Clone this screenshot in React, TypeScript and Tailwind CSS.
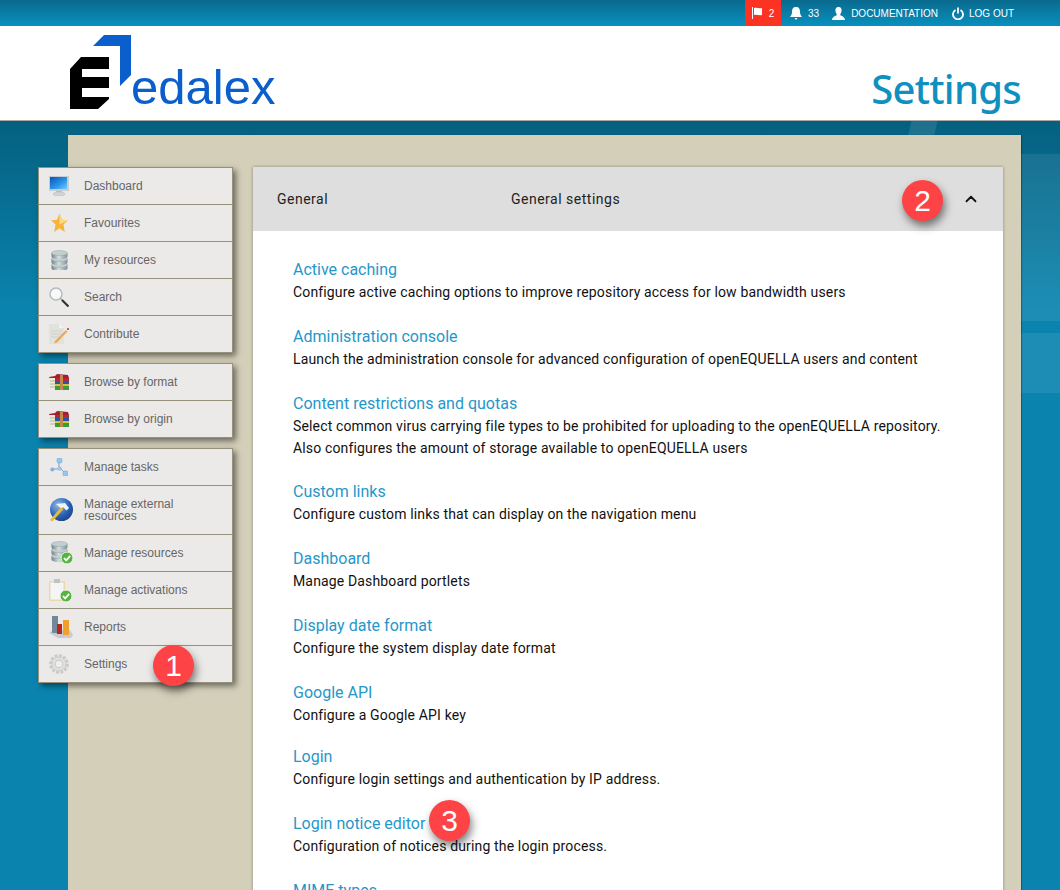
import React from 'react';
import { ChevronUp } from 'lucide-react';

const settingsLinks = [
  { title: 'Active caching', desc: ['Configure active caching options to improve repository access for low bandwidth users'] },
  { title: 'Administration console', desc: ['Launch the administration console for advanced configuration of openEQUELLA users and content'] },
  {
    title: 'Content restrictions and quotas',
    desc: [
      'Select common virus carrying file types to be prohibited for uploading to the openEQUELLA repository.',
      'Also configures the amount of storage available to openEQUELLA users',
    ],
  },
  { title: 'Custom links', desc: ['Configure custom links that can display on the navigation menu'], nudge: '-mt-[1px]' },
  { title: 'Dashboard', desc: ['Manage Dashboard portlets'] },
  { title: 'Display date format', desc: ['Configure the system display date format'] },
  { title: 'Google API', desc: ['Configure a Google API key'] },
  { title: 'Login', desc: ['Configure login settings and authentication by IP address.'], nudge: '-mt-[3px]' },
  { title: 'Login notice editor', desc: ['Configuration of notices during the login process.'] },
  { title: 'MIME types', desc: ['Configure MIME types'] },
];

const CheckBadge = ({ cx = 17, cy = 18 }: { cx?: number; cy?: number }) => (
  <g>
    <circle cx={cx} cy={cy} r="6" fill="#55b53f" stroke="#eef6e8" strokeWidth="1" />
    <path d={`M${cx - 3} ${cy}l2.200 2.400 4-4.600`} fill="none" stroke="#fff" strokeWidth="1.800" />
  </g>
);

const Db = ({ check = false }: { check?: boolean }) => (
  <svg width={check ? 24 : 17} height={check ? 24 : 20} viewBox={check ? '-1 0 24 24' : '0 0 17 20'} className={check ? 'ml-[1px]' : 'ml-[2px]'}>
    <defs>
      <linearGradient id="dbg" x1="0" x2="1" y1="0" y2="0">
        <stop offset="0" stopColor="#6f8388" />
        <stop offset="0.45" stopColor="#d5dee0" />
        <stop offset="1" stopColor="#7f9296" />
      </linearGradient>
    </defs>
    {[12, 6, 0].map((y) => (
      <g key={y}>
        <path d={`M0.500 ${y + 3}v3.500c0 3.500 16 3.500 16 0v-3.500z`} fill="url(#dbg)" />
        <ellipse cx="8.500" cy={y + 3} rx="8" ry="2.500" fill="#c3ced1" stroke="#8b9a9d" strokeWidth="0.400" />
      </g>
    ))}
    {check && <CheckBadge cx={16} cy={17} />}
  </svg>
);

const Books = () => (
  <svg width="20" height="16" viewBox="0 0 20 16">
    <path d="M0 3l6-1 2-2 11 1 1 3-13 0-6 1z" fill="#a01f34" />
    <path d="M6 4h14v3H6z" fill="#b5273c" />
    <path d="M6 7h14v3H6z" fill="#2a55a8" />
    <path d="M6 10h14v2H6z" fill="#d8c23a" />
    <path d="M6 12h14v4H6z" fill="#3b9a3a" />
    <path d="M0 4l6 0v3H2zM1 8h5v2H3zM1 11h5v2H3zM2 13.500h4V16H4z" fill="#efe9d6" />
    <path d="M1 7h5M1 10h5M1 13h5" stroke="#8c9a6a" strokeWidth="0.600" />
    <path d="M11 1h3v15h-3z" fill="#c08a4c" />
  </svg>
);

const icons: Record<string, React.ReactNode> = {
  monitor: (
    <svg width="20" height="20" viewBox="0 0 20 20">
      <defs>
        <linearGradient id="scr" x1="0" x2="1" y1="0" y2="1">
          <stop offset="0" stopColor="#0b55b8" />
          <stop offset="0.6" stopColor="#2c97ea" />
          <stop offset="1" stopColor="#7cc8f6" />
        </linearGradient>
      </defs>
      <path d="M0 0h20v15H0z" fill="#c5cdd1" />
      <path d="M1 1h17v12H1z" fill="url(#scr)" />
      <path d="M7 15h6v2H7z" fill="#b8bec1" />
      <ellipse cx="10" cy="18" rx="6" ry="2" fill="#d0d4d6" stroke="#b3b8ba" strokeWidth="0.500" />
    </svg>
  ),
  star: (
    <svg width="17" height="20" viewBox="0 0 18 20" className="ml-[2px]">
      <path d="M9 0l2.600 6.500L18 7.200l-4.800 4.500 1.400 7.800L9 15.600 3.400 19.500l1.400-7.800L0 7.200l6.400-.7z" fill="#f8b33a" />
      <path d="M9 0l2.600 6.500L18 7.200l-9 4.300z" fill="#fbdc80" />
    </svg>
  ),
  db: <Db />,
  search: (
    <svg width="20" height="20" viewBox="0 0 20 20">
      <circle cx="7" cy="7" r="6" fill="#f6f8f9" stroke="#b4babd" strokeWidth="1.400" />
      <path d="M11.500 11.500l1.500 1.500" stroke="#9aa0a3" strokeWidth="1.500" />
      <path d="M13 13l6.500 6.500" stroke="#333" strokeWidth="2.200" />
    </svg>
  ),
  contribute: (
    <svg width="20" height="20" viewBox="0 0 20 20">
      <path d="M0 0h10l5 4v16H0z" fill="#e2e2dd" />
      <path d="M10 0v4h5z" fill="#f2f2ef" />
      <path d="M2 7h11M2 10h11M2 13h8" stroke="#d2d2cd" />
      <path d="M6 17L17 6l1.500 1.500L8 18.500 5 19.500z" fill="#e9a85c" />
      <circle cx="19" cy="5" r="1" fill="#b5303a" />
    </svg>
  ),
  books: <Books />,
  tasks: (
    <svg width="18" height="18" viewBox="0 0 18 18" className="ml-[1px]">
      <path d="M9 4v6M2 11h10M9 9l6 6" stroke="#7c9cc4" strokeWidth="1" fill="none" />
      <rect x="7" y="0" width="5" height="5" rx="1.500" fill="#9cc5ee" stroke="#6f9ad0" strokeWidth="0.500" />
      <circle cx="2.300" cy="11.500" r="2" fill="#7fb0e6" />
      <rect x="7.500" y="8.500" width="4" height="4" rx="1" fill="#9cc5ee" />
      <rect x="13" y="13" width="5" height="5" rx="1.500" fill="#9cc5ee" stroke="#6f9ad0" strokeWidth="0.500" />
    </svg>
  ),
  hammer: (
    <svg width="24" height="24" viewBox="0 0 24 24">
      <defs>
        <radialGradient id="glb" cx="0.350" cy="0.300" r="0.800">
          <stop offset="0" stopColor="#8fb8ea" />
          <stop offset="0.6" stopColor="#2b62b5" />
          <stop offset="1" stopColor="#173f86" />
        </radialGradient>
      </defs>
      <circle cx="12.500" cy="11.500" r="11.500" fill="url(#glb)" />
      <path d="M1 22L12 9l2.500 2L3.500 23.500z" fill="#e5bb3a" />
      <path d="M7 6l9-1 4 5-2.500 2.500-3-3-3 .5z" fill="#f0f2f5" />
    </svg>
  ),
  dbCheck: <Db check />,
  clipboard: (
    <svg width="24" height="24" viewBox="0 0 24 24">
      <path d="M0 3h16v20H0z" fill="#ecd9a5" />
      <path d="M1.500 4.500h13V21.500h-13z" fill="#f3f5f6" />
      <path d="M5 1h6v4H5z" fill="#bfc3c6" />
      <CheckBadge cx={17} cy={18} />
    </svg>
  ),
  chart: (
    <svg width="24" height="24" viewBox="0 0 24 24">
      <path d="M0 18l4-3h17l3 5-2 3H9z" fill="#c6ccd1" />
      <path d="M3 1h6v17H3z" fill="#72889a" />
      <path d="M8 9h5v10H8z" fill="#b8261c" />
      <path d="M14 5h6v15h-6z" fill="#f0a02c" />
    </svg>
  ),
  gear: (
    <svg width="20" height="20" viewBox="0 0 20 20">
      <circle cx="10" cy="10" r="8.500" fill="none" stroke="#c9c9c9" strokeWidth="2.600" strokeDasharray="3 1.400" />
      <circle cx="10" cy="10" r="6.800" fill="#e2e2e0" stroke="#c6c6c6" strokeWidth="0.800" />
      <circle cx="10" cy="10" r="3.800" fill="#eeeeec" stroke="#cbcbcb" strokeWidth="1.200" />
    </svg>
  ),
};

const menuGroups = [
  [
    { label: 'Dashboard', icon: 'monitor' },
    { label: 'Favourites', icon: 'star' },
    { label: 'My resources', icon: 'db' },
    { label: 'Search', icon: 'search' },
    { label: 'Contribute', icon: 'contribute' },
  ],
  [
    { label: 'Browse by format', icon: 'books' },
    { label: 'Browse by origin', icon: 'books' },
  ],
  [
    { label: 'Manage tasks', icon: 'tasks' },
    { label: 'Manage external resources', icon: 'hammer', tall: true },
    { label: 'Manage resources', icon: 'dbCheck' },
    { label: 'Manage activations', icon: 'clipboard' },
    { label: 'Reports', icon: 'chart' },
    { label: 'Settings', icon: 'gear' },
  ],
];

const Badge = ({ n, className }: { n: number; className: string }) => (
  <div
    className={`absolute flex h-[41px] w-[41px] items-center justify-center rounded-full bg-[#fd4345] text-[30px] text-white shadow-[2px_5px_8px_rgba(0,0,0,0.5)] font-['Liberation_Sans',sans-serif] ${className}`}
  >
    {n}
  </div>
);

export default function App() {
  return (
    <div className="relative h-[890px] w-[1060px] overflow-hidden bg-[linear-gradient(to_bottom,#05607f_121px,#0a84af_310px,#0a84af_100%)] font-['Roboto',sans-serif]">
      {/* background streaks behind the panel */}
      <div className="absolute left-[905px] top-[121px] h-[60px] w-[26px] -skew-x-12 bg-white/10" />
      <div className="absolute right-0 top-[154px] h-[167px] w-[150px] bg-white/8" />
      <div className="absolute right-0 top-[333px] h-[60px] w-[150px] bg-white/8" />

      {/* top bar */}
      <div className="relative flex h-[26px] justify-end bg-[linear-gradient(to_bottom,#0a6a8e,#0890bf)] pr-[46px] text-[10px] text-white font-['Liberation_Sans',sans-serif]">
        <div className="flex w-9 items-center justify-center gap-[6px] bg-[#fc3322]">
          <svg width="11" height="12" viewBox="0 0 11 12" fill="#fff">
            <path d="M0 0h1v12H0zM2 1c3-1 5 1 8 0v7c-3 1-5-1-8 0z" />
          </svg>
          <span>2</span>
        </div>
        <div className="ml-[9px] flex items-center gap-[6px]">
          <svg width="12" height="13" viewBox="0 0 12 13" fill="#fff">
            <path d="M6 0c3 0 4 2 4 5 0 2 1 4 2 5H0c1-1 2-3 2-5 0-3 1-5 4-5zM4.500 11h3L6 13z" />
          </svg>
          <span>33</span>
        </div>
        <div className="ml-[13px] flex items-center gap-[6px]">
          <svg width="13" height="13" viewBox="0 0 13 13" fill="#fff">
            <path d="M6.500 0C9 0 10 2 9.500 4.500 9 6 8.500 7 8 8c1 1 5 1.500 5 5H0c0-3.500 4-4 5-5-.5-1-1-2-1.500-3.500C3 2 4 0 6.500 0z" />
          </svg>
          <span>DOCUMENTATION</span>
        </div>
        <div className="ml-[14px] flex items-center gap-[5px]">
          <svg width="12" height="13" viewBox="0 0 12 13" fill="none" stroke="#fff" strokeWidth="1.800">
            <path d="M3.500 3a5 5 0 1 0 5 0M6 0.500v6" />
          </svg>
          <span>LOG OUT</span>
        </div>
      </div>

      {/* header */}
      <div className="relative flex h-[95px] items-start justify-between border-b border-b-[#a8a8a8] bg-white pl-[70px] pr-[39px]">
        <div className="relative mt-[9px] h-[76px] w-[206px]">
          <svg width="62" height="75" viewBox="70 35 62 75">
            <path d="M70 69L81 57H109V69H82V77H109V88H82V97H109V99L98 109H70z" fill="#000" />
            <path d="M93 46L104 35H131V75L120 86V46z" fill="#0a5fcc" />
          </svg>
          <span className="absolute bottom-[-4px] left-[61px] text-[49px] leading-[56px] text-[#0a5fcc] font-['Liberation_Sans',sans-serif]">
            edalex
          </span>
        </div>
        <h1 className="mt-[35px] text-[40px] font-medium leading-[56px] tracking-[-0.75px] text-[#0f90bf] font-['Noto_Sans',sans-serif]">Settings</h1>
      </div>

      {/* beige panel */}
      <div className="relative ml-[68px] mt-[14px] h-[800px] w-[953px] bg-[#d4cfb9] pt-8 shadow-[1px_0_1px_rgba(0,0,0,0.25)]">
        <div className="-ml-[30px] flex items-start">
          <nav className="flex w-[195px] flex-col gap-[10px] text-[12px] text-[#666] font-['Liberation_Sans',sans-serif]">
            {menuGroups.map((group, i) => (
              <div key={i} className="border border-[#96917d] bg-[#eceae8] shadow-[3px_3px_6px_rgba(0,0,0,0.5)]">
                {group.map((item, j) => (
                  <div
                    key={item.label}
                    className={`flex items-center ${item.tall ? 'h-[49px]' : j === 0 ? 'h-[36px]' : 'h-[37px]'} ${j > 0 ? 'border-t border-t-[#96917d]' : ''}`}
                  >
                    <div className="flex w-[45px] shrink-0 pl-[10px]">{icons[item.icon]}</div>
                    <span className="w-[110px] leading-[12px]">{item.label}</span>
                  </div>
                ))}
              </div>
            ))}
          </nav>

          <main className="ml-5 w-[750px] bg-white shadow-[0_0_3px_rgba(0,0,0,0.35)]">
            <div className="flex h-16 items-center bg-[#dedede] pl-6 pr-[23px] text-sm tracking-[0.5px] text-[#222]">
              <span className="w-[234px]">General</span>
              <span className="flex-1">General settings</span>
              <ChevronUp size={18} strokeWidth={2.4} className="text-[#111]" />
            </div>
            <div className="px-10 pt-[27px]">
              {settingsLinks.map((link) => (
                <div key={link.title} className={`mb-[22px] ${link.nudge ?? ''}`}>
                  <div className="text-base leading-[23px] text-[#2597c9]">{link.title}</div>
                  {link.desc.map((line) => (
                    <div key={line} className="text-sm leading-[22px] tracking-[0.15px] text-[#111]">
                      {line}
                    </div>
                  ))}
                </div>
              ))}
            </div>
          </main>
        </div>
      </div>

      <Badge n={1} className="left-[153px] top-[645px]" />
      <Badge n={2} className="left-[902px] top-[180px]" />
      <Badge n={3} className="left-[429px] top-[800px]" />
    </div>
  );
}
